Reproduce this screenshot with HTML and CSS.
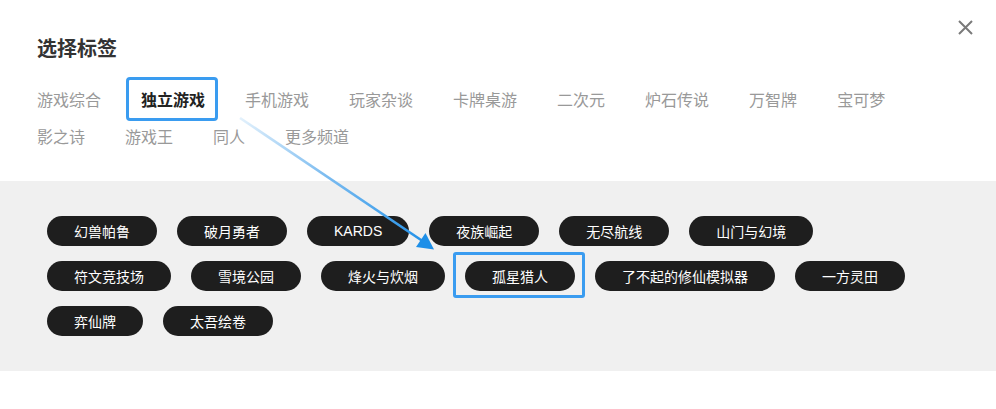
FILE: index.html
```html
<!DOCTYPE html>
<html lang="zh-CN">
<head>
<meta charset="utf-8">
<title>选择标签</title>
<link rel="stylesheet" href="styles.css">
</head>
<body>
<div class="modal">
  <button class="close" aria-label="关闭">
    <svg width="15" height="15" viewBox="0 0 15 15"><path d="M1 1L14 14M14 1L1 14" stroke="#7a7a7a" stroke-width="2" fill="none"/></svg>
  </button>
  <div class="header">
    <h2 class="title">选择标签</h2>
    <div class="tabs">
      <span class="tab">游戏综合</span>
      <span class="tab tab-active">独立游戏</span>
      <span class="tab">手机游戏</span>
      <span class="tab">玩家杂谈</span>
      <span class="tab">卡牌桌游</span>
      <span class="tab">二次元</span>
      <span class="tab">炉石传说</span>
      <span class="tab">万智牌</span>
      <span class="tab">宝可梦</span>
      <span class="tab">影之诗</span>
      <span class="tab">游戏王</span>
      <span class="tab">同人</span>
      <span class="tab">更多频道</span>
    </div>
  </div>
  <div class="panel">
    <span class="pill">幻兽帕鲁</span>
    <span class="pill">破月勇者</span>
    <span class="pill pill-latin">KARDS</span>
    <span class="pill">夜族崛起</span>
    <span class="pill">无尽航线</span>
    <span class="pill">山门与幻境</span>
    <span class="pill">符文竞技场</span>
    <span class="pill">雪境公园</span>
    <span class="pill">烽火与炊烟</span>
    <span class="pill pill-marked">孤星猎人</span>
    <span class="pill">了不起的修仙模拟器</span>
    <span class="pill">一方灵田</span>
    <span class="pill">弈仙牌</span>
    <span class="pill">太吾绘卷</span>
  </div>
  <svg class="arrow" width="996" height="409" viewBox="0 0 996 409">
    <defs>
      <linearGradient id="ag" x1="240" y1="118" x2="430" y2="246" gradientUnits="userSpaceOnUse">
        <stop offset="0" stop-color="#e3f1fc"/>
        <stop offset="0.45" stop-color="#7cbcf0"/>
        <stop offset="1" stop-color="#1e8fe8"/>
      </linearGradient>
    </defs>
    <line x1="240" y1="118" x2="424" y2="242" stroke="url(#ag)" stroke-width="2.6"/>
    <polygon points="434,249.5 416,247 425.5,233" fill="#1e8fe8"/>
  </svg>
</div>
</body>
</html>
```

FILE: styles.css
```css
* { box-sizing: border-box; }
html, body { margin: 0; padding: 0; background: #fff; }
body {
  font-family: "Noto Sans CJK SC", "Microsoft YaHei", "Liberation Sans", sans-serif;
  width: 996px;
  height: 409px;
  overflow: hidden;
}
.modal {
  position: relative;
  width: 996px;
  height: 409px;
  background: #fff;
}
.close {
  position: absolute;
  top: 20px;
  left: 958px;
  width: 15px;
  height: 15px;
  padding: 0;
  border: 0;
  background: none;
  display: block;
}
.close svg { display: block; }
.header {
  padding: 34px 37px 0;
}
.title {
  margin: 0;
  font-size: 20px;
  line-height: 28px;
  font-weight: 700;
  color: #333;
}
.tabs {
  display: flex;
  flex-wrap: wrap;
  column-gap: 40px;
  margin-top: 19px;
  font-size: 16px;
  line-height: 37px;
  color: #999;
  width: 880px;
}
.tab { position: relative; white-space: nowrap; }
.tab-active {
  color: #222;
  font-weight: 700;
}
.tab-active::after {
  content: "";
  position: absolute;
  left: -15px;
  right: -13px;
  top: -4px;
  bottom: -3px;
  border: 3px solid #3a9cf0;
  border-radius: 4px;
}
.panel {
  margin-top: 26px;
  height: 190px;
  background: #f0f0f0;
  padding: 35px 47px;
  display: flex;
  flex-wrap: wrap;
  align-content: flex-start;
  column-gap: 20px;
  row-gap: 15px;
  width: 996px;
}
.pill {
  position: relative;
  display: inline-block;
  height: 30px;
  line-height: 30px;
  padding: 0 27px;
  border-radius: 15px;
  background: #1e1e1e;
  color: #fff;
  font-size: 14px;
  white-space: nowrap;
}
.pill-latin {
  font-family: "Liberation Sans", "Noto Sans CJK SC", sans-serif;
}
.pill-marked::after {
  content: "";
  position: absolute;
  left: -12px;
  right: -10px;
  top: -9px;
  bottom: -7px;
  border: 3px solid #3a9cf0;
  border-radius: 3px;
}
.arrow {
  position: absolute;
  left: 0;
  top: 0;
  pointer-events: none;
}
```
